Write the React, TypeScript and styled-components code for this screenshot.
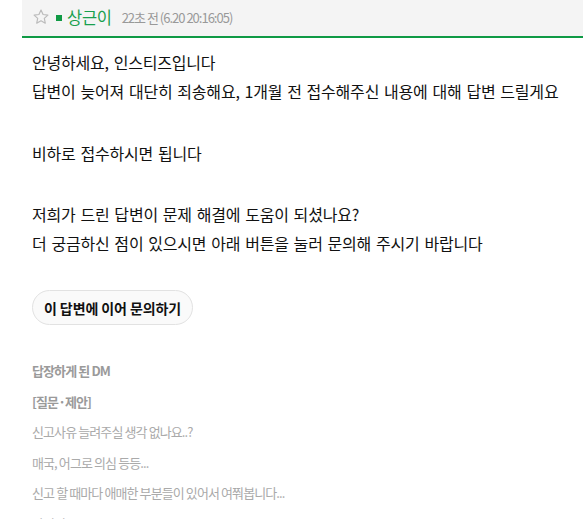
import React from "react";
import styled, { createGlobalStyle } from "styled-components";

const Global = createGlobalStyle`
  html, body { margin: 0; padding: 0; background: #fff; }
  body { font-family: "Noto Sans CJK KR", "Noto Sans", sans-serif; overflow: hidden; }
`;

const Page = styled.div`
  width: 583px;
  height: 519px;
  overflow: hidden;
  padding-left: 22px;
  box-sizing: border-box;
`;

const Header = styled.div`
  height: 36px;
  background: #f4f4f4;
  border-bottom: 2px solid #0f9a45;
  display: flex;
  align-items: center;
  padding-left: 10px;
  box-sizing: content-box;
`;

const Star = styled.svg`
  width: 18px;
  height: 18px;
  margin-right: 6px;
  margin-top: -2px;
`;

const Dot = styled.span`
  width: 6px;
  height: 6px;
  background: #109a45;
  margin-right: 5px;
  margin-top: -1px;
`;

const Name = styled.span`
  font-size: 16.5px;
  color: #19a04e;
  margin-right: 10px;
  margin-top: -3px;
  letter-spacing: -0.3px;
`;

const Time = styled.span`
  font-size: 13px;
  color: #999;
  letter-spacing: -1px;
  margin-top: -1px;
`;

const Body = styled.div`
  padding: 10px 0 0 10px;
`;

const Line = styled.p<{ $gap?: number }>`
  margin: 0;
  margin-top: ${(p) => p.$gap ?? 0}px;
  font-size: 16px;
  line-height: 29px;
  color: #111;
  letter-spacing: -0.2px;
  word-spacing: 1.5px;
  white-space: nowrap;
`;

const AskButton = styled.button`
  margin-top: 32px;
  height: 35px;
  padding: 0 11px;
  border-radius: 18px;
  border: 1px solid #e2e2e2;
  background: #fafafa;
  font-family: "Noto Sans CJK KR", "Noto Sans", sans-serif;
  font-weight: 700;
  font-size: 14px;
  color: #111;
  letter-spacing: -0.1px;
  display: flex;
  align-items: center;
`;

const Quoted = styled.div`
  margin-top: 31px;
  display: flex;
  flex-direction: column;
`;

const QTitle = styled.div<{ $bold?: boolean }>`
  font-size: 13px;
  line-height: 30px;
  color: ${(p) => (p.$bold ? "#9a9a9a" : "#aaa")};
  font-weight: ${(p) => (p.$bold ? 700 : 400)};
  letter-spacing: -0.9px;
  white-space: nowrap;
  & + & {
    margin-top: 0.5px;
  }
`;

export default function App() {
  return (
    <>
      <Global />
      <Page>
        <Header>
          <Star viewBox="0 0 24 24">
            <path
              d="M12 2.8l2.75 5.9 6.45.75-4.8 4.4 1.3 6.4L12 17.05 6.3 20.25l1.3-6.4-4.8-4.4 6.45-.75z"
              fill="none"
              stroke="#bbbbbb"
              strokeWidth="1.6"
              strokeLinejoin="round"
            />
          </Star>
          <Dot />
          <Name>상근이</Name>
          <Time>22초 전 (6.20 20:16:05)</Time>
        </Header>
        <Body>
          <Line>안녕하세요, 인스티즈입니다</Line>
          <Line>답변이 늦어져 대단히 죄송해요, 1개월 전 접수해주신 내용에 대해 답변 드릴게요</Line>
          <Line $gap={33}>비하로 접수하시면 됩니다</Line>
          <Line $gap={32}>저희가 드린 답변이 문제 해결에 도움이 되셨나요?</Line>
          <Line>더 궁금하신 점이 있으시면 아래 버튼을 눌러 문의해 주시기 바랍니다</Line>
          <AskButton>이 답변에 이어 문의하기</AskButton>
          <Quoted>
            <QTitle $bold>답장하게 된 DM</QTitle>
            <QTitle $bold>[질문·제안]</QTitle>
            <QTitle>신고사유 늘려주실 생각 없나요..?</QTitle>
            <QTitle>매국, 어그로 의심 등등...</QTitle>
            <QTitle>신고 할 때마다 애매한 부분들이 있어서 여쭤봅니다...</QTitle>
            <QTitle>아이디 : @_101784</QTitle>
          </Quoted>
        </Body>
      </Page>
    </>
  );
}
